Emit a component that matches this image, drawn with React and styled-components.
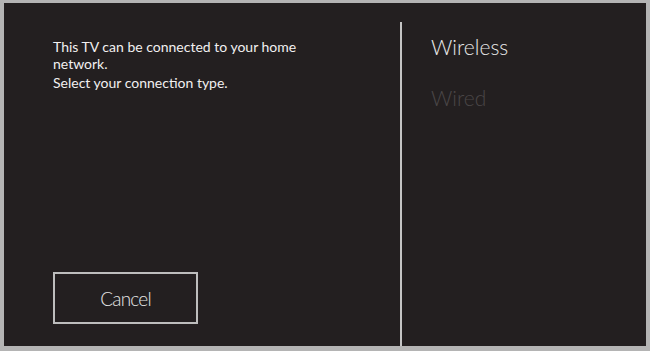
import React from "react";
import styled, { createGlobalStyle } from "styled-components";

const Global = createGlobalStyle`
    html, body {
        margin: 0;
        padding: 0;
        background: #9c9c9c;
    }
    body {
        font-family: Lato, "Open Sans", sans-serif;
    }
`;

const Frame = styled.div`
    box-sizing: border-box;
    width: 650px;
    height: 351px;
    border-style: solid;
    border-color: #b4b4b4;
    border-width: 3px 4px 5px 4px;
    background: #231f20;
    display: flex;
`;

const Left = styled.div`
    width: 396px;
    padding: 35px 0 0 49px;
    box-sizing: border-box;
    display: flex;
    flex-direction: column;
`;

const Message = styled.p`
    margin: 0 0 ${(p) => p.gap || 0}px 0;
    color: #f2f0f0;
    font-size: 14px;
    line-height: 17px;
    width: 300px;
`;

const CancelButton = styled.button`
    margin-top: auto;
    margin-bottom: 22px;
    width: 145px;
    height: 52px;
    background: transparent;
    border: 2px solid #bdbdbd;
    color: #e6e6e6;
    font-family: Lato, "Open Sans", sans-serif;
    font-weight: 300;
    font-size: 19px;
    letter-spacing: -0.8px;
    padding: 0;
`;

const Right = styled.div`
    margin-top: 19px;
    border-left: 2px solid #c4c4c4;
    flex: 1;
    padding: 12px 0 0 29px;
    display: flex;
    flex-direction: column;
    gap: 25px;
`;

const Option = styled.div`
    font-family: Lato, "Open Sans", sans-serif;
    font-weight: 300;
    font-size: 21px;
    line-height: 26px;
    color: ${(p) => (p.dim ? "#4a4647" : "#e8e8e8")};
`;

export default function App() {
    return (
        <>
            <Global />
            <Frame>
                <Left>
                    <Message gap={2}>
                        This TV can be connected to your home network.
                    </Message>
                    <Message>Select your connection type.</Message>
                    <CancelButton>Cancel</CancelButton>
                </Left>
                <Right>
                    <Option>Wireless</Option>
                    <Option dim>Wired</Option>
                </Right>
            </Frame>
        </>
    );
}
